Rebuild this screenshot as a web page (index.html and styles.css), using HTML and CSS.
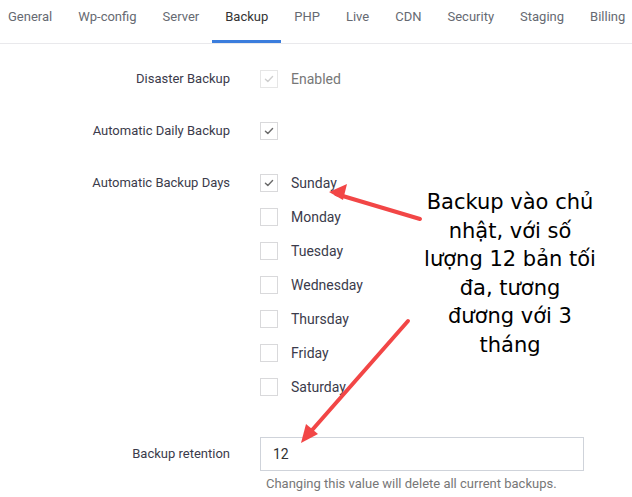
FILE: index.html
```html
<!DOCTYPE html>
<html>
<head>
<meta charset="utf-8">
<link rel="stylesheet" href="styles.css">
</head>
<body>
<nav class="tabs">
  <a class="tab">General</a>
  <a class="tab">Wp-config</a>
  <a class="tab">Server</a>
  <a class="tab active">Backup</a>
  <a class="tab">PHP</a>
  <a class="tab">Live</a>
  <a class="tab">CDN</a>
  <a class="tab">Security</a>
  <a class="tab">Staging</a>
  <a class="tab">Billing</a>
</nav>

<main class="form">
  <div class="field">
    <div class="label">Disaster Backup</div>
    <div class="control">
      <label class="check disabled"><span class="box checked"><svg viewBox="0 0 18 18"><path d="M5 9.2l2.7 2.6L13 6.3"/></svg></span><span class="opt">Enabled</span></label>
    </div>
  </div>
  <div class="field">
    <div class="label">Automatic Daily Backup</div>
    <div class="control">
      <label class="check"><span class="box checked"><svg viewBox="0 0 18 18"><path d="M5 9.2l2.7 2.6L13 6.3"/></svg></span></label>
    </div>
  </div>
  <div class="field">
    <div class="label">Automatic Backup Days</div>
    <div class="control days">
      <label class="check"><span class="box checked"><svg viewBox="0 0 18 18"><path d="M5 9.2l2.7 2.6L13 6.3"/></svg></span><span class="opt">Sunday</span></label>
      <label class="check"><span class="box"></span><span class="opt">Monday</span></label>
      <label class="check"><span class="box"></span><span class="opt">Tuesday</span></label>
      <label class="check"><span class="box"></span><span class="opt">Wednesday</span></label>
      <label class="check"><span class="box"></span><span class="opt">Thursday</span></label>
      <label class="check"><span class="box"></span><span class="opt">Friday</span></label>
      <label class="check"><span class="box"></span><span class="opt">Saturday</span></label>
    </div>
  </div>
  <div class="field retention">
    <div class="label">Backup retention</div>
    <div class="control">
      <div class="input">12</div>
      <div class="help">Changing this value will delete all current backups.</div>
    </div>
  </div>
</main>

<div class="note">Backup vào chủ<br>nhật, với số<br>lượng 12 bản tối<br>đa, tương<br>đương với 3<br>tháng</div>

<svg class="arrows" width="632" height="497" viewBox="0 0 632 497">
  <g stroke="#f24646" stroke-width="4" stroke-linecap="round" fill="none">
    <path d="M420 219 L336 194"/>
    <path d="M408 321 L306 437"/>
  </g>
  <g fill="#f24646">
    <path d="M329 192 L347 184 L343 200 Z"/>
    <path d="M301 443 L306 424 L318 434 Z"/>
  </g>
</svg>
</body>
</html>
```

FILE: styles.css
```css
* { box-sizing: border-box; }
html, body { margin: 0; padding: 0; background: #fff; }
body {
  font-family: Roboto, "Liberation Sans", Arial, sans-serif;
  color: #3b3b4b;
  width: 632px;
  height: 497px;
  overflow: hidden;
  position: relative;
}
.tabs {
  display: flex;
  height: 44px;
  border-bottom: 1px solid #e9e9ec;
  margin-left: -5px;
  white-space: nowrap;
}
.tab {
  display: block;
  padding: 0 13px;
  height: 43px;
  line-height: 34px;
  font-size: 13px;
  color: #666a72;
  border-bottom: 3px solid transparent;
}
.tab.active {
  color: #333;
  border-bottom-color: #3b7ddd;
}
.form { padding-top: 18px; }
.field {
  display: grid;
  grid-template-columns: 230px 1fr;
  column-gap: 30px;
  margin-bottom: 18px;
}
.label {
  text-align: right;
  font-size: 13px;
  line-height: 34px;
  color: #3b3b4b;
}
.check {
  display: flex;
  align-items: center;
  height: 34px;
}
.box {
  width: 18px;
  height: 18px;
  border: 1px solid #d9d9db;
  background: #fff;
  display: block;
}
.box svg { width: 16px; height: 16px; display: block; }
.box svg path {
  fill: none;
  stroke: #6b6b6b;
  stroke-width: 1.6;
  stroke-linecap: round;
  stroke-linejoin: round;
}
.check.disabled .box { border-color: #e6e6e6; }
.check.disabled .box svg path { stroke: #cfcfcf; }
.opt {
  margin-left: 13px;
  font-size: 14px;
  color: #3b3b4b;
}
.check.disabled .opt { color: #777; }
.retention { margin-top: 33px; }
.input {
  width: 324px;
  height: 34px;
  border: 1px solid #cfd3da;
  padding-left: 12px;
  font-size: 14px;
  line-height: 32px;
  color: #333;
}
.help {
  padding-left: 6px;
  margin-top: 4px;
  font-size: 13px;
  line-height: 18px;
  color: #777;
}
.note {
  position: absolute;
  left: 405px;
  width: 210px;
  top: 188px;
  text-align: center;
  font-family: "DejaVu Sans", Verdana, sans-serif;
  font-size: 21px;
  line-height: 28.5px;
  color: #000;
}
.arrows {
  position: absolute;
  left: 0;
  top: 0;
  pointer-events: none;
}
```
